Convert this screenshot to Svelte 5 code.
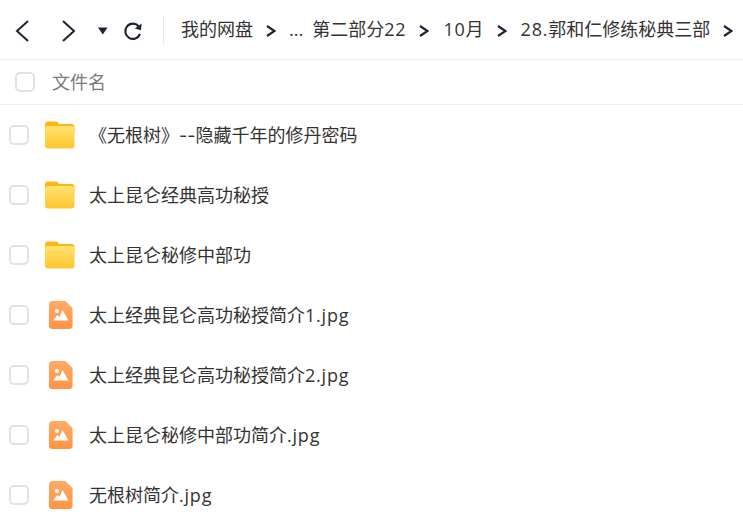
<script>
  const crumbs = ['第二部分22', '10月', '28.郭和仁修练秘典三部'];
  const rows = [
    { name: '《无根树》--隐藏千年的修丹密码', type: 'folder' },
    { name: '太上昆仑经典高功秘授', type: 'folder' },
    { name: '太上昆仑秘修中部功', type: 'folder' },
    { name: '太上经典昆仑高功秘授简介1.jpg', type: 'image' },
    { name: '太上经典昆仑高功秘授简介2.jpg', type: 'image' },
    { name: '太上昆仑秘修中部功简介.jpg', type: 'image' },
    { name: '无根树简介.jpg', type: 'image' }
  ];
  // Latin runs are set slightly wider than the CJK text around them.
  const runs = (s) => s.split(/([\x21-\x7e]+)/).filter(Boolean).map((t) => ({
    t,
    cls: /^-+$/.test(t) ? 'dash' : /^[\x21-\x7e]+$/.test(t) ? 'lat' : ''
  }));
</script>

{#snippet sep()}
  <svg class="sep" width="10" height="12" viewBox="0 0 10 12"><path d="M1 1l7.5 5L1 11" fill="none" stroke="#1c2333" stroke-width="2.2"/></svg>
{/snippet}

{#snippet label(s)}
  {#each runs(s) as r}<span class={r.cls}>{r.t}</span>{/each}
{/snippet}

<div class="page">
  <header class="bar">
    <div class="nav">
      <svg class="back" width="14" height="24" viewBox="0 0 14 24"><path d="M13 2L2 12l11 10" fill="none" stroke="#1c2333" stroke-width="2"/></svg>
      <svg class="fwd" width="14" height="24" viewBox="0 0 14 24"><path d="M1 2l11 10L1 22" fill="none" stroke="#1c2333" stroke-width="2"/></svg>
      <svg class="drop" width="10" height="8" viewBox="0 0 10 8"><path d="M0 .5h9.6L4.8 7.5z" fill="#1c2333"/></svg>
      <svg class="reload" width="20" height="20" viewBox="0 0 20 20"><path d="M15.6 5.2A7.6 7.6 0 1 0 17 13" fill="none" stroke="#1c2333" stroke-width="2.1"/><path d="M18.6 2.6l-.6 6.6-6.2-1.600z" fill="#1c2333"/></svg>
    </div>
    <nav class="crumbs">
      <span class="crumb">我的网盘</span>{@render sep()}
      <span class="crumb dots">...</span>
      {#each crumbs as c}
        <span class="crumb">{@render label(c)}</span>{@render sep()}
      {/each}
    </nav>
  </header>

  <div class="head">
    <span class="check"></span>
    <span class="title">文件名</span>
  </div>

  <ul class="list">
    {#each rows as r}
      <li class="row">
        <span class="check"></span>
        <span class="icon">
          {#if r.type === 'folder'}
            <svg width="30" height="28" viewBox="0 0 30 28">
              <defs>
                <linearGradient id="ff" x1="0" y1="0" x2="0" y2="1"><stop offset="0" stop-color="#ffe26f"/><stop offset="1" stop-color="#ffc62e"/></linearGradient>
              </defs>
              <path d="M0 3.500A3 3 0 0 1 3 .5h7.500c1.200 0 1.800 .5 2.600 1.300L14.500 3H26.500A3 3 0 0 1 29.500 6V12H0z" fill="#fdb913"/>
              <rect x="0" y="5" width="29.500" height="22.500" rx="3" fill="url(#ff)"/>
            </svg>
          {:else}
            <svg class="pic" width="24" height="28" viewBox="0 0 24 28">
              <defs>
                <linearGradient id="fi" x1="0" y1="0" x2="0" y2="1"><stop offset="0" stop-color="#ffab68"/><stop offset="1" stop-color="#ff9443"/></linearGradient>
              </defs>
              <path d="M3.500 0H15.500a2 2 0 0 1 1.500 .6L23 6.600a2 2 0 0 1 .6 1.500V24.500A3.500 3.500 0 0 1 20 28H3.500A3.500 3.500 0 0 1 0 24.500V3.500A3.500 3.500 0 0 1 3.500 0z" fill="url(#fi)"/>
              <path d="M4 19.500L8.500 14L10.500 16L13.500 9L19.500 19.500z" fill="#fff"/>
              <circle cx="8" cy="10" r="2" fill="#fff"/>
            </svg>
          {/if}
        </span>
        <span class="name">{@render label(r.name)}</span>
      </li>
    {/each}
  </ul>
</div>

<style>
  :global(body) { margin: 0; background: #fff; }
  .page {
    width: 743px;
    height: 518px;
    overflow: hidden;
    font-family: "Open Sans", "Noto Sans CJK SC", sans-serif;
    font-size: 18px;
    color: #333;
  }
  .bar {
    height: 59px;
    border-bottom: 1px solid #eeeeee;
    display: flex;
    align-items: center;
    white-space: nowrap;
  }
  .nav {
    display: flex;
    align-items: center;
    width: 164px;
    height: 28px;
    flex: none;
    box-sizing: border-box;
    padding: 2px 0 0 15px;
    border-right: 1px solid #e8e8e8;
  }
  .fwd { margin-left: 33px; }
  .drop { margin-left: 22px; }
  .reload { margin-left: 15px; }
  .crumbs {
    display: flex;
    align-items: center;
    margin-left: 17px;
    line-height: 24px;
    color: #333;
  }
  .crumb { position: relative; top: -1px; }
  .sep { margin: 2px 14px 0 13px; flex: none; }
  .dots { margin-left: -1px; margin-right: 9px; }
  .lat { letter-spacing: 0.8px; }
  .dash { font-family: "Inter", sans-serif; }
  .head {
    height: 44px;
    border-bottom: 1px solid #eeeeee;
    display: flex;
    align-items: center;
    padding-left: 15px;
  }
  .title { margin-left: 17px; color: #7a7a7a; line-height: 24px; }
  .check {
    width: 16px;
    height: 16px;
    flex: none;
    border: 2px solid #e2e2e2;
    border-radius: 5px;
    background: #fff;
  }
  .list { list-style: none; margin: 0; padding: 0; }
  .row {
    height: 60px;
    display: flex;
    align-items: center;
    padding-left: 9px;
  }
  .icon {
    width: 30px;
    margin-left: 16px;
    flex: none;
    display: flex;
    justify-content: center;
  }
  .icon svg { display: block; }
  .icon .pic { margin-left: 1px; }
  .name { margin-left: 14px; white-space: nowrap; line-height: 24px; }
</style>
